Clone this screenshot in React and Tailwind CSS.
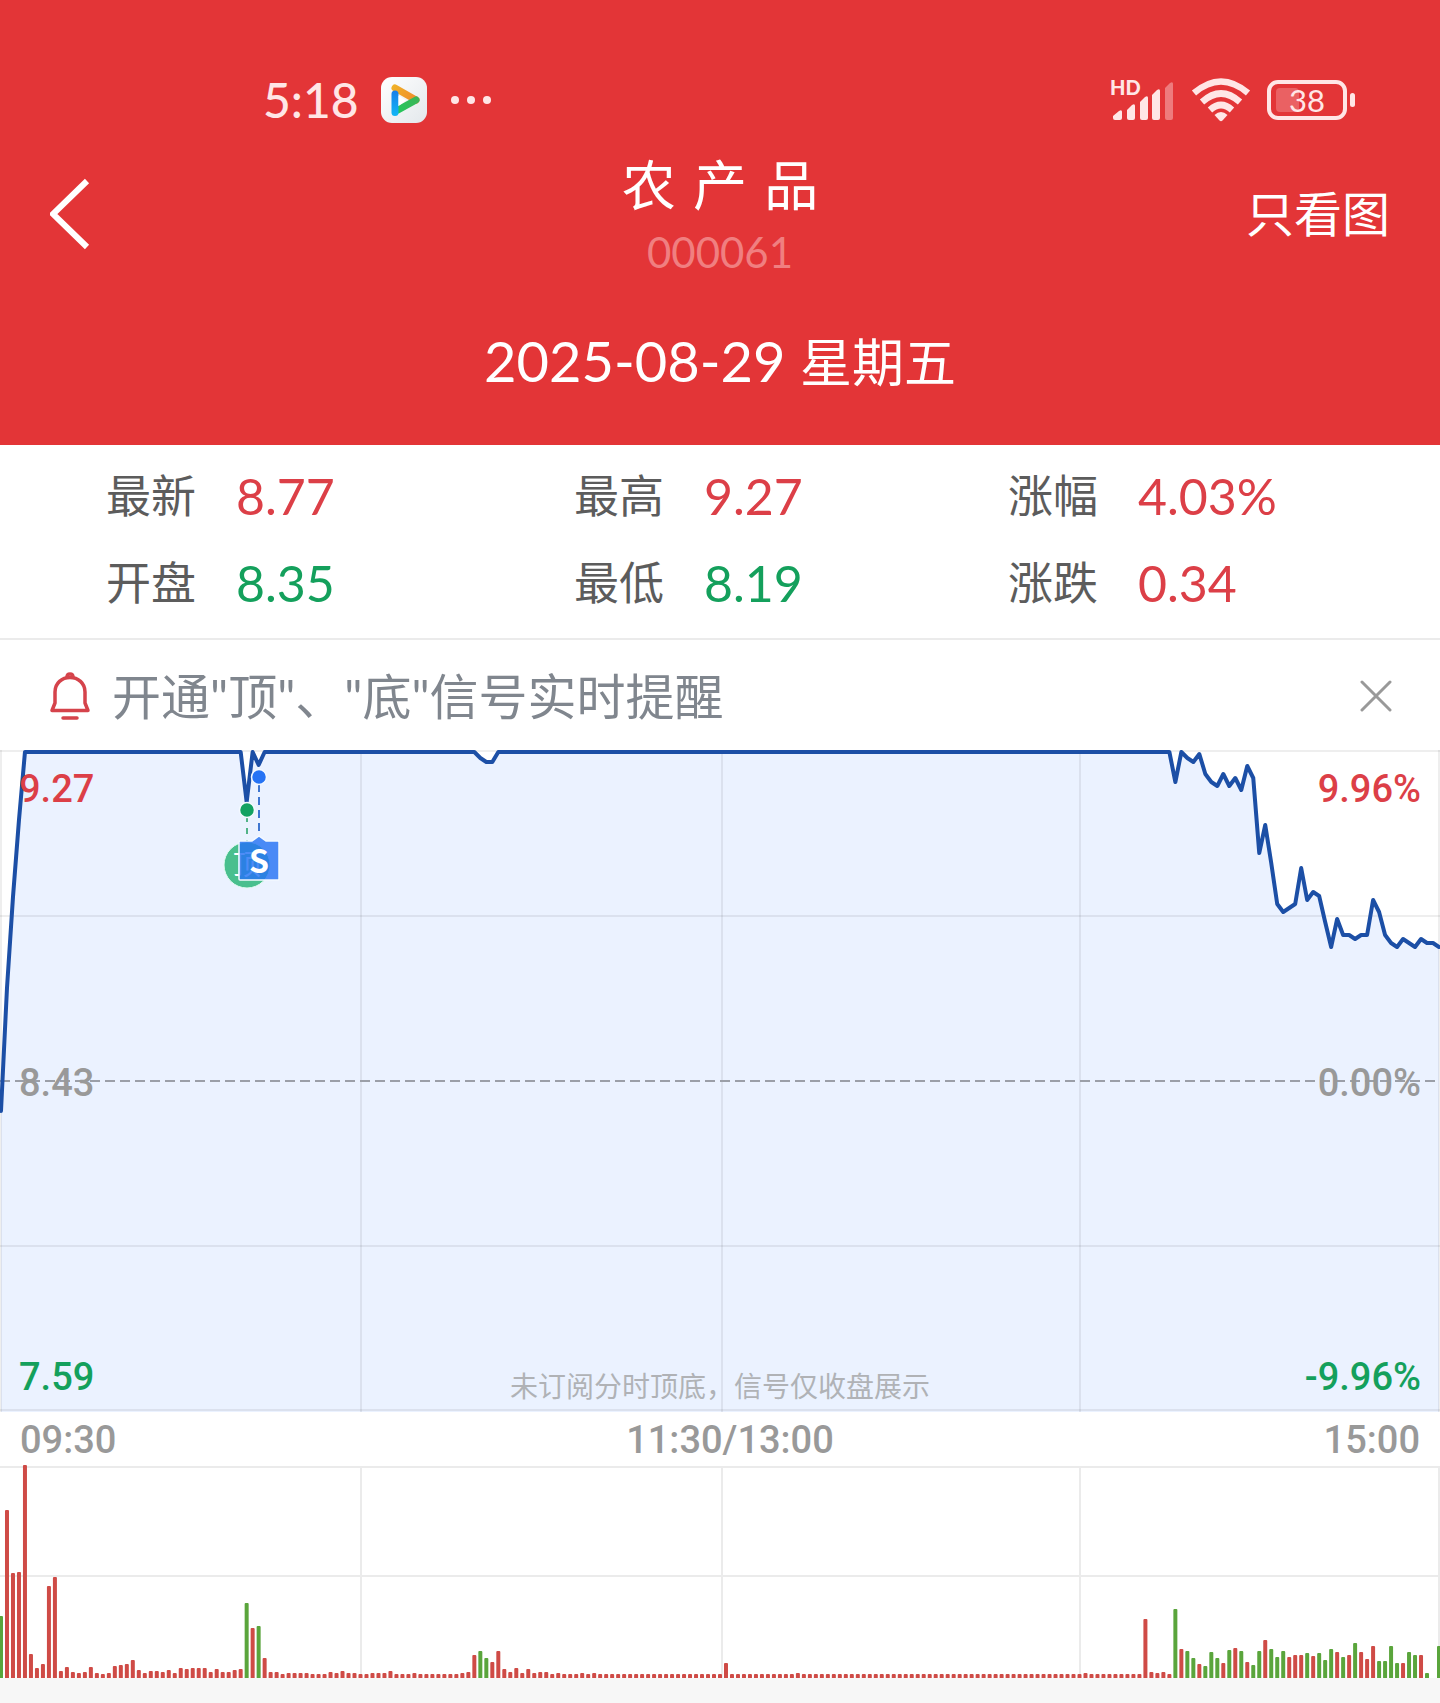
import React from "react";

const STEPS = 240;
const CHART_W = 1440;
const xAt = (i) => 1 + (i * 1438) / STEPS;

// [minute, y] breakpoints of the price line, inside a 662-unit-high plot
const PRICE = [
  [0, 361], [1, 238], [2, 147], [3, 70], [4, 2], [40, 2], [41, 52], [42, 2], [43, 15], [44, 2],
  [79, 2], [80, 8], [81, 12], [82, 12], [83, 2], [195, 2], [196, 32], [197, 2], [198, 8], [199, 12],
  [200, 4], [201, 24], [202, 32], [203, 36], [204, 24], [205, 36], [206, 28], [207, 40], [208, 16],
  [209, 28], [210, 103], [211, 75], [212, 113], [213, 154], [214, 162], [215, 158], [216, 154],
  [217, 118], [218, 150], [219, 142], [220, 146], [221, 172], [222, 197], [223, 169], [224, 185],
  [225, 185], [226, 189], [227, 185], [228, 185], [229, 150], [230, 162], [231, 185], [232, 193],
  [233, 197], [234, 189], [235, 193], [236, 197], [237, 189], [238, 193], [239, 193], [240, 197],
];

const VOL_START = [
  62, 168, 105, 106, 213, 24, 10, 14, 92, 101, 7, 11, 6, 5, 6, 11, 5, 4, 5, 12, 13, 14, 18, 8, 5, 7, 7, 6, 8, 5,
  10, 9, 10, 10, 10, 6, 9, 6, 6, 8, 9, 75, 50, 52, 20, 6, 6, 4, 5, 5, 5, 5, 4, 4, 4, 6, 5, 7, 5, 5, 4, 4, 5, 5, 5,
  7, 4, 4, 4, 5, 4, 4, 4, 4, 4, 4, 4, 5, 6, 23, 27, 20, 16, 27, 9, 6, 10, 5, 9, 5, 6, 6, 4, 5, 4, 4, 4, 5, 4, 5,
];
const VOL_END = [
  59, 6, 5, 6, 4, 69, 29, 27, 20, 14, 12, 26, 20, 15, 28, 30, 27, 16, 13, 27, 38, 29, 21, 27, 21, 23, 23, 25, 22,
  25, 18, 29, 26, 21, 23, 35, 26, 19, 32, 17, 17, 32, 15, 15, 26, 23, 23, 5, 0, 32,
];
const VOLUME = Array.from({ length: STEPS + 1 }, (_, i) => {
  if (i < VOL_START.length) return VOL_START[i];
  if (i >= 191) return VOL_END[i - 191];
  if (i === 121) return 15;
  return i === 133 || i === 181 ? 5 : 4;
});
const GREEN = new Set([
  0, 41, 43, 80, 81, 196, 198, 199, 201, 202, 203, 205, 207, 209, 210, 212, 213, 214, 218, 220, 221, 222, 224, 226,
  230, 231, 232, 233, 235, 236, 238, 240,
]);

const linePoints = PRICE.map(([i, y]) => `${xAt(i)},${y}`).join(" ");

const STATS = [
  ["最新", "8.77", "text-[#dc3f47]"],
  ["最高", "9.27", "text-[#dc3f47]"],
  ["涨幅", "4.03%", "text-[#dc3f47]"],
  ["开盘", "8.35", "text-[#14a05c]"],
  ["最低", "8.19", "text-[#14a05c]"],
  ["涨跌", "0.34", "text-[#dc3f47]"],
];

function StatusBar() {
  return (
    <div className="flex h-14 items-center justify-between pl-[263px] pr-[84px] text-[#ffe6e6]">
      <div className="flex items-center">
        <span className="text-[48px] font-medium leading-14">5:18</span>
        <svg className="ml-[22px] size-[46px]" viewBox="0 0 46 46" aria-hidden="true">
          <defs>
            <linearGradient id="tile" x1="0" y1="0" x2="1" y2="1">
              <stop offset="0" stopColor="#ffffff" />
              <stop offset="1" stopColor="#e3e8ec" />
            </linearGradient>
            <linearGradient id="blue" gradientUnits="userSpaceOnUse" x1="0" y1="10" x2="0" y2="38">
              <stop offset="0" stopColor="#1976e8" />
              <stop offset="1" stopColor="#12b4f5" />
            </linearGradient>
            <linearGradient id="orange" gradientUnits="userSpaceOnUse" x1="10" y1="8" x2="36" y2="24">
              <stop offset="0" stopColor="#f0b428" />
              <stop offset="1" stopColor="#f08a2c" />
            </linearGradient>
            <linearGradient id="green" gradientUnits="userSpaceOnUse" x1="14" y1="36" x2="38" y2="22">
              <stop offset="0" stopColor="#22c95c" />
              <stop offset="1" stopColor="#3cb558" />
            </linearGradient>
          </defs>
          <rect width="46" height="46" rx="11" fill="url(#tile)" />
          <g fill="none" strokeWidth="7" strokeLinecap="round">
            <path d="M14 11 35 23" stroke="url(#orange)" />
            <path d="M35 23 17 33" stroke="url(#green)" />
            <path d="M14 17V35.500" stroke="url(#blue)" />
          </g>
          <path d="M17.500 18.500V29L25 23.500Z" fill="#fff" />
        </svg>
        <svg className="ml-5 h-4 w-12" viewBox="0 0 48 16" fill="currentColor" aria-hidden="true">
          <circle cx="8" cy="8" r="4" />
          <circle cx="24" cy="8" r="4" />
          <circle cx="40" cy="8" r="4" />
        </svg>
      </div>
      <div className="flex items-center gap-4">
        <div className="relative h-[42px] w-[65px]">
          <span className="absolute left-0 top-0 text-[20px] font-black leading-4">HD</span>
          <svg className="h-full w-16" viewBox="0 0 64 42" fill="currentColor" aria-hidden="true">
            <path d="M3 37 9 32Q12 30 12 33V39Q12 41 10 41H5Q3 41 3 39Z" />
            <path d="M17 31 22 26Q25 24 25 27V39Q25 41 23 41H19Q17 41 17 39Z" />
            <path d="M30 23 35 18Q38 16 38 19V39Q38 41 36 41H32Q30 41 30 39Z" />
            <path d="M42 16 47 11Q50 9 50 12V39Q50 41 48 41H44Q42 41 42 39Z" />
            <path opacity=".4" d="M55 9 60 4Q63 2 63 5V39Q63 41 61 41H57Q55 41 55 39Z" />
          </svg>
        </div>
        <svg className="h-[44px] w-[60px]" viewBox="0 0 60 44" fill="none" stroke="currentColor" strokeWidth="6.500" aria-hidden="true">
          <path d="M3 15Q30 -8 57 15" />
          <path d="M11 24Q30 7 49 24" />
          <path d="M19 32Q30 22 41 32" />
          <path d="M23.500 37Q30 31 36.500 37L31.500 42.500Q30 44 28.500 42.500Z" fill="currentColor" stroke="none" />
        </svg>
        <div className="relative h-10 w-[89px]">
          <svg className="size-full" viewBox="0 0 89 40" aria-hidden="true">
            <rect x="2" y="2" width="76" height="36" rx="9" fill="none" stroke="currentColor" strokeWidth="4" />
            <rect x="9" y="8" width="23" height="24" rx="4" fill="currentColor" opacity=".25" />
            <rect x="83" y="13" width="5" height="14" rx="2.500" fill="currentColor" />
          </svg>
          <span className="absolute inset-y-0 left-0 w-20 text-center text-[31px] leading-10">38</span>
        </div>
      </div>
    </div>
  );
}

function PriceChart() {
  return (
    <div className="relative">
      <svg className="block h-[662px] w-full" viewBox={`0 0 ${CHART_W} 662`} preserveAspectRatio="none" role="img" aria-label="分时走势">
        <polygon points={`1,662 ${linePoints} 1439,662`} fill="#ebf2ff" />
        <g stroke="#000" strokeOpacity=".065" strokeWidth="2" fill="none">
          <path d="M0 1H1440M0 166H1440M0 496H1440M0 660H1440" />
          <path d="M1 0V662M361 0V662M722 0V662M1080 0V662M1439 0V662" />
        </g>
        <path d="M0 331H1440" stroke="#9b9fa8" strokeWidth="2" strokeDasharray="10 5" />
        <polyline points={linePoints} fill="none" stroke="#1c4fa6" strokeWidth="4" strokeLinejoin="round" strokeLinecap="round" />
        <path d="M247 66V92" stroke="#53b388" strokeWidth="2" strokeDasharray="6 6" />
        <path d="M259 34V82" stroke="#3f76d0" strokeWidth="2" strokeDasharray="8 5" />
        <circle cx="247" cy="60" r="7.500" fill="#14a262" stroke="#f4f9ff" strokeWidth="1.500" />
        <circle cx="259" cy="27" r="7.500" fill="#2673f4" stroke="#f4f9ff" strokeWidth="1.500" />
        <circle cx="247" cy="115" r="23" fill="#49bf8e" stroke="#e2fbf1" strokeWidth="1" />
        <text x="247" y="125" textAnchor="middle" fontSize="28" fill="#fff" fontFamily="'Noto Sans CJK SC', sans-serif">顶</text>
        <path d="M240 91H252L259 86 266 91H278Q279 91 279 92V129Q279 130 278 130H240Q239 130 239 129V92Q239 91 240 91Z" fill="#2673f4" fillOpacity=".82" stroke="#f4f9ff" strokeWidth="1.500" />
        <text x="259" y="123" textAnchor="middle" fontSize="32" fontWeight="700" fill="#fff" fontFamily="'Noto Sans CJK SC', sans-serif">S</text>
      </svg>
      <div className="absolute inset-0 flex justify-between px-[19px] pb-[13px] pt-[17px] font-['Roboto',sans-serif] text-[38px] font-medium leading-11">
        <div className="flex flex-col justify-between">
          <span className="text-[#dc3f47]">9.27</span>
          <span className="text-[#999]">8.43</span>
          <span className="text-[#14a05c]">7.59</span>
        </div>
        <div className="flex flex-col justify-between text-right">
          <span className="text-[#dc3f47]">9.96%</span>
          <span className="text-[#999]">0.00%</span>
          <span className="text-[#14a05c]">-9.96%</span>
        </div>
      </div>
      <p className="absolute inset-x-0 bottom-2 text-center text-[28px] leading-9 text-[#b0b2b6]">
        未订阅分时顶底，信号仅收盘展示
      </p>
    </div>
  );
}

function VolumeChart() {
  return (
    <svg className="block h-[213px] w-full" viewBox={`0 0 ${CHART_W} 213`} preserveAspectRatio="none" role="img" aria-label="成交量">
      <g stroke="#ebebeb" strokeWidth="2" fill="none">
        <path d="M0 2H1440M0 111H1440" />
        <path d="M361 2V213M722 2V213M1080 2V213M1439 2V213" />
      </g>
      {VOLUME.map((h, i) =>
        h ? (
          <path
            key={i}
            d={`M${xAt(i) - 2} 213V${214 - h}q0 -1 1 -1h2q1 0 1 1V213Z`}
            fill={GREEN.has(i) ? "#5aa53c" : "#cf4b46"}
          />
        ) : null
      )}
    </svg>
  );
}

export default function App() {
  return (
    <main className="w-full bg-[#f7f7f7] pb-[25px] font-['Lato','Noto_Sans_CJK_SC',sans-serif]">
      <header className="bg-[#e33537] pb-[43px] pt-[72px] text-white">
        <StatusBar />
        <div className="mt-5 grid grid-cols-[1fr_auto_1fr] items-center px-[50px]">
          <button type="button" aria-label="返回" className="justify-self-start pt-1">
            <svg className="h-[72px] w-10" viewBox="2 0 40 72" fill="none" stroke="currentColor" strokeWidth="6">
              <path d="M39 3 5 36 39 69" />
            </svg>
          </button>
          <div className="text-center">
            <h1 className="font-['DejaVu_Sans','Noto_Sans_CJK_SC',sans-serif] text-[54px] font-normal leading-20">农 产 品</h1>
            <p className="text-[42px] leading-12 text-[#f07f80]">000061</p>
          </div>
          <button type="button" className="justify-self-end pt-1 text-[48px] leading-16">只看图</button>
        </div>
        <p className="mt-[45px] text-center text-[56px] leading-20">
          2025-08-29 <span className="text-[52px]">星期五</span>
        </p>
      </header>

      <dl className="grid grid-cols-[468fr_434fr_432fr] border-b-2 border-[#ebebeb] bg-white pb-3 pl-[106px] pt-[7px]">
        {STATS.map(([label, value, color]) => (
          <div key={label} className="flex h-[87px] items-center gap-10">
            <dt className="text-[45px] leading-16 text-[#5c5c5c]">{label}</dt>
            <dd className={`text-[50px] leading-16 ${color}`}>{value}</dd>
          </div>
        ))}
      </dl>

      <section className="flex h-[110px] items-center bg-white px-12 pt-0.5">
        <svg className="h-12 w-11" viewBox="0 0 44 48" fill="none" stroke="#d5434b" strokeWidth="3.500" strokeLinecap="round" strokeLinejoin="round" aria-hidden="true">
          <path d="M7 20C7 11 14 5.500 22 5.500S37 11 37 20V31L40 38.500H4L7 31Z" />
          <path d="M19 5Q19 2 22 2T25 5" />
          <path d="M15 46H29" />
        </svg>
        <p className="ml-5 flex-1 text-[49px] leading-16 text-[#80868e]">开通"顶"、"底"信号实时提醒</p>
        <button type="button" aria-label="关闭">
          <svg className="size-8" viewBox="0 0 32 32" stroke="#999" strokeWidth="3" strokeLinecap="round">
            <path d="M2 2 30 30M30 2 2 30" />
          </svg>
        </button>
      </section>

      <section className="bg-white">
        <PriceChart />
        <div className="grid h-[53px] grid-cols-[1fr_auto_1fr] items-center px-5 pt-0.5 font-['Roboto',sans-serif] text-[38px] font-medium leading-11 text-[#999]">
          <span>09:30</span>
          <span className="pl-5">11:30/13:00</span>
          <span className="text-right">15:00</span>
        </div>
        <VolumeChart />
      </section>
    </main>
  );
}
